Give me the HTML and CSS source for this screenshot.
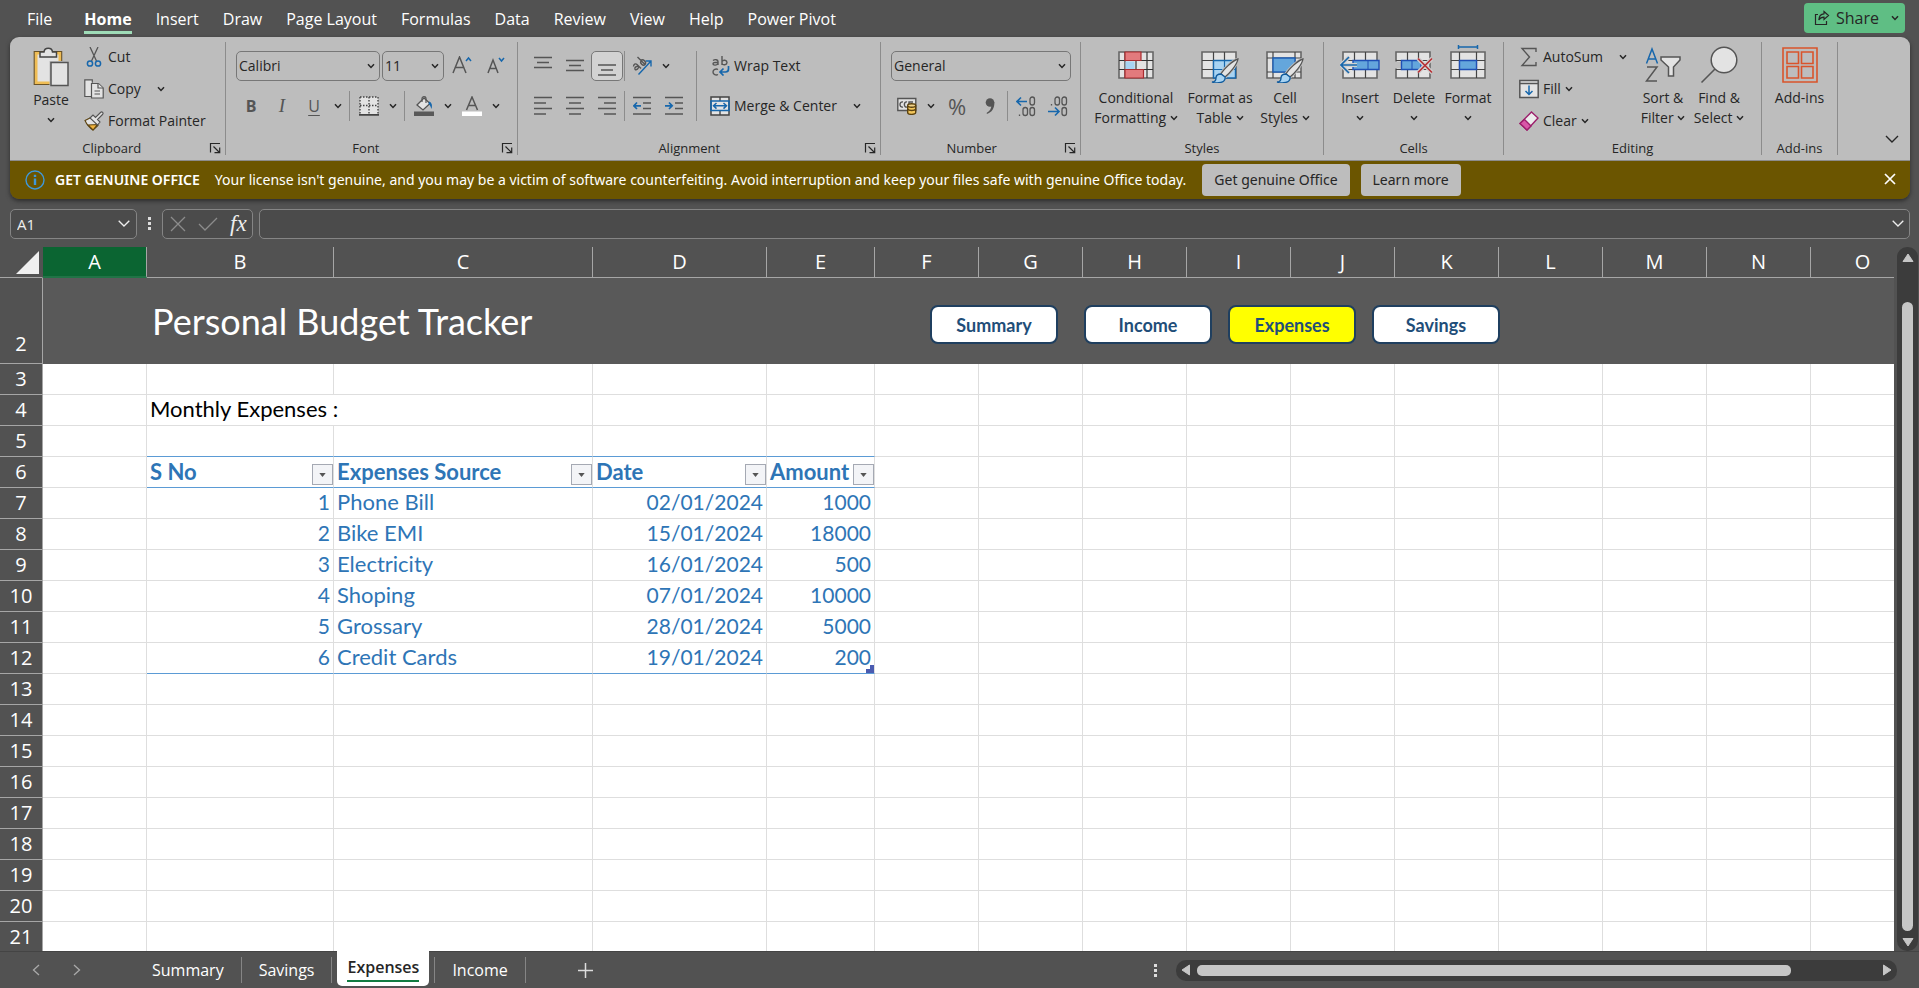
FILE: index.html
```html
<!DOCTYPE html>
<html lang="en">
<head>
<meta charset="utf-8">
<title>Personal Budget Tracker</title>
<link rel="stylesheet" href="styles.css">
</head>
<body>
<svg class="defs" aria-hidden="true">
  <symbol id="chev" viewBox="0 0 8 6"><path d="M1 1.2 4 4.4 7 1.2" fill="none" stroke="currentColor" stroke-width="1.5"/></symbol>
  <symbol id="launch" viewBox="0 0 12 12"><path d="M1.5 10.5V1.5H11M4.5 4.5l6 6M10.700 5.500v5.200H5.500" fill="none" stroke="currentColor" stroke-width="1.2"/></symbol>
  <symbol id="grid" viewBox="0 0 36 28"><path d="M1 1h34v26H1z" fill="#e3e3e3" stroke="#666" stroke-width="1.600"/><path d="M1 9.500h34M1 18.500h34M12.500 1v26M23.500 1v26" stroke="#444" stroke-width="1.200"/></symbol>
  <symbol id="brush" viewBox="0 0 28 26"><path d="M27 1C22 2 12 12 10 16l4 3c4-3 12-12 13-18z" fill="#e3e3e3" stroke="#bdbdbd" stroke-width="3"/><path d="M27 1C22 2 12 12 10 16l4 3c4-3 12-12 13-18z" fill="#e3e3e3" stroke="#555" stroke-width="1.300"/><path d="M10 16c-4 0-5 2-5 4 0 3-2 4-4 4 5 2 14 1 13-5z" fill="#a8d3f2" stroke="#0f5a9c" stroke-width="1.300"/></symbol>
</svg>

<header class="menu">
  <nav class="tabs">
    <a href="#file" class="tab file">File</a>
    <a href="#home" class="tab active">Home</a>
    <a href="#insert" class="tab">Insert</a>
    <a href="#draw" class="tab">Draw</a>
    <a href="#layout" class="tab">Page Layout</a>
    <a href="#formulas" class="tab">Formulas</a>
    <a href="#data" class="tab">Data</a>
    <a href="#review" class="tab">Review</a>
    <a href="#view" class="tab">View</a>
    <a href="#help" class="tab">Help</a>
    <a href="#pivot" class="tab">Power Pivot</a>
  </nav>
  <button class="share"><svg width="16" height="16" viewBox="0 0 16 16" fill="none" stroke="currentColor" stroke-width="1.200"><path d="M4 4.500H1.500v10h11V11M10 1.500l4.500 4-4.500 4V7.200C7.500 7.200 6 8 4.800 10 5 6.500 7 4 10 3.800z"/></svg>Share<svg class="chev"><use href="#chev"/></svg></button>
</header>

<div class="panel">
  <div class="ribbon">
    <section class="group clipboard">
      <div class="body">
        <button class="big"><span class="pic low"><svg width="36" height="40" viewBox="0 0 36 40"><path d="M3 6h24v30H3z" fill="#e3e3e3" stroke="#efbd55" stroke-width="3"/><path d="M1.200 4.500h27.500v33H1.200z" fill="none" stroke="#6b5326" stroke-width="1.100"/><path d="M7 10V5h4c.5-5 8-5 8.500 0h4v5z" fill="#e3e3e3" stroke="#444" stroke-width="1.500"/><path d="M16.500 14h18v25h-18z" fill="#bdbdbd"/><path d="M18 15.500h17v23H18z" fill="#e3e3e3" stroke="#555" stroke-width="1.500"/></svg></span><span>Paste</span><svg class="chev"><use href="#chev"/></svg></button>
        <div class="stack">
          <button class="small"><svg width="20" height="20" viewBox="0 0 20 20" fill="none"><path d="M6 0l6.500 14M14 0 7.500 14" stroke="#555" stroke-width="1.300"/><circle cx="6" cy="16.500" r="2.600" stroke="#1767ac" stroke-width="1.500"/><circle cx="14" cy="16.500" r="2.600" stroke="#1767ac" stroke-width="1.500"/></svg>Cut</button>
          <button class="small"><svg width="20" height="20" viewBox="0 0 20 20" fill="#e3e3e3" stroke="#555" stroke-width="1.200"><path d="M8 17.500H.8V.8h7.500v3"/><path d="M7.500 4.500h7l4.700 4.500v10H7.500z"/><path d="M14 4.500V9h5M10.500 12h5.500M10.500 15h5.500"/></svg>Copy<svg class="chev far"><use href="#chev"/></svg></button>
          <button class="small"><svg width="20" height="20" viewBox="0 0 20 20" stroke="#555" stroke-width="1.100"><path d="M1 9.500 7 6.500l7 8-5 4.500c-3-2-6-5-8-9.500z" fill="#e3e3e3" stroke="#5c4310"/><path d="M4 14l9.500-.5L9 19z" fill="#efb23c" stroke="#5c4310"/><path d="M6 7 9 4l2.500 2.500 5-5c1.500-1.500 3.500.5 2 2l-5 5L16 11l-2.500 3z" fill="#e3e3e3"/></svg>Format Painter</button>
        </div>
      </div>
      <footer><span></span><span>Clipboard</span><svg class="launch"><use href="#launch"/></svg></footer>
    </section>

    <section class="group font">
      <div class="body rows">
        <div class="row tight">
          <label class="combo w-font"><select aria-label="Font"><option>Calibri</option></select><svg class="chev"><use href="#chev"/></svg></label>
          <label class="combo w-size"><select aria-label="Font size"><option>11</option></select><svg class="chev"><use href="#chev"/></svg></label>
          <button class="tool" aria-label="Increase font size"><svg width="20" height="20" viewBox="0 0 20 20" fill="none" stroke-width="1.500"><path d="M1 17 7.500 1 14 17M3 11.500h9" stroke="#555"/><path d="M14 5l2.500-3L19 5" stroke="#1767ac"/></svg></button>
          <button class="tool" aria-label="Decrease font size"><svg width="20" height="20" viewBox="0 0 20 20" fill="none" stroke-width="1.500"><path d="M2 17 7 4 12 17M4 12.500h6.500" stroke="#555"/><path d="M13 2l2.500 3L18 2" stroke="#1767ac"/></svg></button>
        </div>
        <div class="row">
          <button class="tool glyph b">B</button><button class="tool glyph i">I</button><button class="tool glyph u">U</button><button class="drop" aria-label="Underline options"><svg class="chev"><use href="#chev"/></svg></button>
          <i class="sep"></i>
          <button class="tool" aria-label="Borders"><svg width="20" height="20" viewBox="0 0 20 20"><path d="M1 1h18v17H1z" fill="#e3e3e3"/><path d="M1 1h18v17M1 1v17M10 1v17M1 9.500h18" fill="none" stroke="#444" stroke-width="1.400" stroke-dasharray="1.500 1.500"/><path d="M0 18.800h20" stroke="#444" stroke-width="1.700"/></svg></button><button class="drop" aria-label="Border options"><svg class="chev"><use href="#chev"/></svg></button>
          <i class="sep"></i>
          <button class="tool" aria-label="Fill colour"><svg width="20" height="20" viewBox="0 0 20 20"><path d="M10 2 3 9l6 5 7-6.500z" fill="#e3e3e3" stroke="#555" stroke-width="1.300"/><path d="M8 6V2.500c0-2.500 4-2.500 4 0V7" fill="none" stroke="#555" stroke-width="1.200"/><path d="M15 5.500c3 1 3.500 4 2.500 7.500-1-2-1-4-3-5z" fill="#1767ac"/><path d="M0 15.500h20V20H0z" fill="#595959"/></svg></button><button class="drop" aria-label="Fill options"><svg class="chev"><use href="#chev"/></svg></button>
          <button class="tool" aria-label="Font colour"><svg width="20" height="20" viewBox="0 0 20 20"><path d="M4.500 14 10 1l5.500 13M6.500 9.500h7" fill="none" stroke="#555" stroke-width="1.500"/><path d="M0 15.500h20V20H0z" fill="#fff"/></svg></button><button class="drop" aria-label="Font colour options"><svg class="chev"><use href="#chev"/></svg></button>
        </div>
      </div>
      <footer><span></span><span>Font</span><svg class="launch"><use href="#launch"/></svg></footer>
    </section>

    <section class="group align">
      <div class="body split">
        <div class="rows">
          <div class="row">
            <button class="tool" aria-label="Top align"><svg width="18" height="20" viewBox="0 0 18 20" class="ln"><path d="M0 1.500h18M3 6.500h12M0 11.500h18"/></svg></button>
            <button class="tool" aria-label="Middle align"><svg width="18" height="20" viewBox="0 0 18 20" class="ln"><path d="M0 4.500h18M3 9.500h12M0 14.500h18"/></svg></button>
            <button class="tool on" aria-label="Bottom align"><svg width="18" height="20" viewBox="0 0 18 20" class="ln"><path d="M0 9h18M3 14h12M0 19h18"/></svg></button>
            <i class="sep"></i>
            <button class="tool" aria-label="Orientation"><svg width="20" height="20" viewBox="0 0 20 20" fill="none" stroke-width="1.400"><path d="M6.500 18.500 19 5M19 10.500V5h-5.500" stroke="#1767ac"/><g stroke="#555"><path d="M1.500 10.500c0-2 2-3.500 3.500-2l4 4M6.500 10.500c-1.500-1-4.500 1-3.500 2.700 1.200 1.500 4-.7 3.500-2.700M5.500 1l8 8M9 4.500c2-2 6 1.500 4 4-2 2-5.500-1.500-4-4"/></g></svg></button><button class="drop" aria-label="Orientation options"><svg class="chev"><use href="#chev"/></svg></button>
          </div>
          <div class="row">
            <button class="tool" aria-label="Align left"><svg width="18" height="20" viewBox="0 0 18 20" class="ln"><path d="M0 1.500h18M0 7h12M0 12.500h18M0 18h12"/></svg></button>
            <button class="tool" aria-label="Center"><svg width="18" height="20" viewBox="0 0 18 20" class="ln"><path d="M0 1.500h18M3 7h12M0 12.500h18M3 18h12"/></svg></button>
            <button class="tool" aria-label="Align right"><svg width="18" height="20" viewBox="0 0 18 20" class="ln"><path d="M0 1.500h18M6 7h12M0 12.500h18M6 18h12"/></svg></button>
            <i class="sep"></i>
            <button class="tool" aria-label="Decrease indent"><svg width="18" height="20" viewBox="0 0 18 20" class="ln"><path d="M0 1.500h18M10 7h8M10 12.500h8M0 18h18"/><path d="M8 9.800H1M4 6.500.800 9.800 4 13" class="bl"/></svg></button>
            <button class="tool" aria-label="Increase indent"><svg width="18" height="20" viewBox="0 0 18 20" class="ln"><path d="M0 1.500h18M10 7h8M10 12.500h8M0 18h18"/><path d="M0 9.800h7M4 6.500l3.200 3.300L4 13" class="bl"/></svg></button>
          </div>
        </div>
        <div class="rows second">
          <button class="small"><svg width="20" height="20" viewBox="0 0 20 20" fill="none" stroke="#555" stroke-width="1.400"><path d="M3 4.500c2-1.500 5-1 5 1V9M8 6.300c-3 0-5 .5-5 1.700s3.500 2 5-.5M12 0v9M12 5.500c1-2 5-1.500 5 1s-4 3-5 1M8 13.500c-2-1.200-5 0-5 2.500s3 3.700 5 2.500"/><path d="M18.500 10v3c0 2-1 3-3 3H10M13.500 12.500 10 16l3.500 3.500" stroke="#1767ac" stroke-width="1.700"/></svg>Wrap Text</button>
          <button class="small"><svg width="20" height="20" viewBox="0 0 20 20" fill="none"><path d="M1 1h18v18H1z" fill="#e3e3e3" stroke="#444" stroke-width="1.500"/><path d="M10 1v4M10 15v4" stroke="#444" stroke-width="1.400"/><path d="M1 5h18v9.500H1z" stroke="#1767ac" stroke-width="1.600"/><path d="M3.500 9.800h13M6.500 7 3.500 9.800l3 2.800M13.500 7l3 2.800-3 2.800" stroke="#1767ac" stroke-width="1.500"/></svg>Merge &amp; Center<svg class="chev far"><use href="#chev"/></svg></button>
        </div>
      </div>
      <footer><span></span><span>Alignment</span><svg class="launch"><use href="#launch"/></svg></footer>
    </section>

    <section class="group number">
      <div class="body rows">
        <div class="row"><label class="combo w-num"><select aria-label="Number format"><option>General</option></select><svg class="chev"><use href="#chev"/></svg></label></div>
        <div class="row">
          <button class="tool" aria-label="Accounting format"><svg width="20" height="18" viewBox="0 0 20 18" fill="none" stroke="#555" stroke-width="1.400"><path d="M.8 1.500h18v12H.8z" fill="#e3e3e3"/><path d="M6 5c-4-1-4 6 0 5M10 5c-3.500-1-3.500 6 0 5M12 10V5h4"/><path d="M10.700 8.500v7c0 2.500 8 2.500 8 0v-7" fill="#f3c65b" stroke="#5c4310"/><ellipse cx="14.700" cy="8.500" rx="4" ry="1.700" fill="#f3d48a" stroke="#5c4310"/><path d="M10.700 12c1 2 7 2 8 0" stroke="#5c4310"/></svg></button><button class="drop" aria-label="Accounting options"><svg class="chev"><use href="#chev"/></svg></button>
          <button class="tool wide glyph pc">%</button>
          <button class="tool comma" aria-label="Comma style"><svg width="12" height="20" viewBox="0 0 12 20"><circle cx="6" cy="6.500" r="4.300" fill="#555"/><path d="M10.300 6c.5 6-2.500 10.500-7.500 12v-1.300C6 15 7.500 12.500 7.300 9z" fill="#555"/></svg></button>
          <i class="sep"></i>
          <button class="tool" aria-label="Increase decimal"><svg width="20" height="22" viewBox="0 0 20 22" fill="none" stroke="#555" stroke-width="1.300"><rect x="14" y="2" width="4.500" height="8" rx="2.200"/><rect x="7" y="12.500" width="4.500" height="8" rx="2.200"/><rect x="14" y="12.500" width="4.500" height="8" rx="2.200"/><path d="M3.500 19.500v1.500"/><path d="M11 6.500H1M5 2.500l-4 4 4 4" stroke="#1767ac" stroke-width="1.600"/></svg></button>
          <button class="tool" aria-label="Decrease decimal"><svg width="20" height="22" viewBox="0 0 20 22" fill="none" stroke="#555" stroke-width="1.300"><rect x="7" y="2" width="4.500" height="8" rx="2.200"/><rect x="14" y="2" width="4.500" height="8" rx="2.200"/><rect x="14" y="12.500" width="4.500" height="8" rx="2.200"/><path d="M3.500 9v1.500"/><path d="M0 16.500h11M7 12.500l4 4-4 4" stroke="#1767ac" stroke-width="1.600"/></svg></button>
        </div>
      </div>
      <footer><span></span><span>Number</span><svg class="launch"><use href="#launch"/></svg></footer>
    </section>

    <section class="group styles">
      <div class="body">
        <button class="big w-cf"><span class="pic"><svg width="36" height="28" viewBox="0 0 36 28"><path d="M1 1h34v26H1z" fill="#e3e3e3" stroke="#666" stroke-width="1.600"/><path d="M1 9.500h34M1 18.500h34M7 1v26M29 1v26M18 9v10" stroke="#333" stroke-width="1.200"/><path d="M7 1h16v8.500H7zM7 18.500h18.500V27H7z" fill="#e37a7d" stroke="#a92c30" stroke-width="1.200"/><path d="M7.500 10.500h9v7.500h-9z" fill="#a8d3f2"/></svg></span><span>Conditional</span><span>Formatting <svg class="chev"><use href="#chev"/></svg></span></button>
        <button class="big w-ft"><span class="pic"><svg width="38" height="36" viewBox="0 0 38 36"><use href="#grid" y="4" width="36" height="28"/><path d="M12.500 13.500h22v17.500h-22z" fill="#a8d3f2" stroke="#1767ac" stroke-width="1.400"/><path d="M12.500 22.500h22M23.500 13v18" stroke="#1767ac" stroke-width="1.200"/><use href="#brush" x="10" y="11" width="28" height="26"/></svg></span><span>Format as</span><span>Table <svg class="chev"><use href="#chev"/></svg></span></button>
        <button class="big w-cs"><span class="pic"><svg width="38" height="36" viewBox="0 0 38 36"><path d="M1 5h34v26H1z" fill="#e3e3e3" stroke="#666" stroke-width="1.600"/><path d="M1 11h34M1 25h34M7 5v26M29 5v26" stroke="#444" stroke-width="1.200"/><path d="M7 11h22v14H7z" fill="#64a6dc" stroke="#1f5fb5" stroke-width="1.400"/><use href="#brush" x="10" y="11" width="28" height="26"/></svg></span><span>Cell</span><span>Styles <svg class="chev"><use href="#chev"/></svg></span></button>
      </div>
      <footer><span></span><span>Styles</span><span></span></footer>
    </section>

    <section class="group cells">
      <div class="body">
        <button class="big"><span class="pic"><svg width="40" height="28" viewBox="0 0 40 28"><use href="#grid" x="2" width="36" height="28"/><path d="M13 9.500h26v9H13z" fill="#64a6dc" stroke="#1f4fb5" stroke-width="1.400"/><path d="M28 9.500v9" stroke="#1f4fb5"/><path d="M17 14H1M9 6l-8 8 8 8" fill="none" stroke="#d0d0d0" stroke-width="4"/><path d="M17 14H1M9 6l-8 8 8 8" fill="none" stroke="#1767ac" stroke-width="1.600"/></svg></span><span>Insert</span><svg class="chev"><use href="#chev"/></svg></button>
        <button class="big"><span class="pic"><svg width="38" height="28" viewBox="0 0 38 28"><use href="#grid" width="36" height="28"/><path d="M0 10.500h6v7H0z" fill="#bdbdbd"/><path d="M6.500 9.500H26v9H6.500z" fill="#64a6dc" stroke="#1f4fb5" stroke-width="1.400"/><path d="M17 9.500v9" stroke="#1f4fb5"/><path d="M23 7.500 37 21.500M37 7.500 23 21.500" stroke="#d0d0d0" stroke-width="4"/><path d="M23 7.500 37 21.500M37 7.500 23 21.500" stroke="#b83236" stroke-width="1.700"/></svg></span><span>Delete</span><svg class="chev"><use href="#chev"/></svg></button>
        <button class="big"><span class="pic"><svg width="36" height="40" viewBox="0 0 36 40"><path d="M1 7h34v26H1z" fill="#e3e3e3" stroke="#666" stroke-width="1.600"/><path d="M1 15.500h34M1 24.500h34M9.500 7v26M26.500 7v26" stroke="#444" stroke-width="1.200"/><path d="M9.500 15.500h17v9h-17z" fill="#64a6dc" stroke="#1f4fb5" stroke-width="1.400"/><path d="M8.500 2h19M8.500 0v4M27.500 0v4" stroke="#1767ac" stroke-width="1.500"/></svg></span><span>Format</span><svg class="chev"><use href="#chev"/></svg></button>
      </div>
      <footer><span></span><span>Cells</span><span></span></footer>
    </section>

    <section class="group editing">
      <div class="body">
        <div class="stack">
          <button class="small"><svg width="20" height="20" viewBox="0 0 20 20"><path d="M17 5V1.500H3l7.500 8.500L3 18.500h14V15" fill="none" stroke="#555" stroke-width="1.400"/></svg>AutoSum<svg class="chev far"><use href="#chev"/></svg></button>
          <button class="small"><svg width="20" height="20" viewBox="0 0 20 20"><path d="M.8 1.500h18.400v17H.8z" fill="#e3e3e3" stroke="#555" stroke-width="1.500"/><path d="M1 4.500h18" stroke="#555" stroke-width="1.500"/><path d="M10 6.500v9M6.500 12l3.500 3.500 3.500-3.500" fill="none" stroke="#1767ac" stroke-width="1.500"/></svg>Fill <svg class="chev"><use href="#chev"/></svg></button>
          <button class="small"><svg width="20" height="20" viewBox="0 0 20 20" stroke="#9c1f6c" stroke-width="1.400"><path d="M12.500 1 19 7 8 19 1 12.500z" fill="#ececec"/><path d="M5.500 8.500 12 15l-4 4-7-6.500z" fill="#d957a8"/></svg>Clear <svg class="chev"><use href="#chev"/></svg></button>
        </div>
        <button class="big"><span class="pic"><svg width="36" height="36" viewBox="0 0 36 36" fill="none" stroke-width="1.500"><path d="M1.500 16.500 7 2l5.500 14.500M3.500 12h7" stroke="#1767ac"/><path d="M2 20h10L1.500 34H12" stroke="#555"/><path d="M16 10h19v3l-6.500 7v9h-5v-9L16 13z" fill="#e3e3e3" stroke="#555"/></svg></span><span>Sort &amp;</span><span>Filter <svg class="chev"><use href="#chev"/></svg></span></button>
        <button class="big"><span class="pic"><svg width="38" height="38" viewBox="0 0 38 38"><circle cx="24" cy="14" r="12.800" fill="#e3e3e3" stroke="#555" stroke-width="1.500"/><path d="M15 23 1.500 36.500" stroke="#555" stroke-width="1.600"/></svg></span><span>Find &amp;</span><span>Select <svg class="chev"><use href="#chev"/></svg></span></button>
      </div>
      <footer><span></span><span>Editing</span><span></span></footer>
    </section>

    <section class="group addins">
      <div class="body">
        <button class="big"><span class="pic"><svg width="36" height="36" viewBox="0 0 36 36" fill="none" stroke="#d9542b" stroke-width="1.600"><path d="M1 1h34v34H1zM5 5h11.500v11.500H5zM19.500 5H31v11.500H19.500zM5 19.500h11.500V31H5zM19.500 19.500H31V31H19.500z"/></svg></span><span>Add-ins</span></button>
      </div>
      <footer><span></span><span>Add-ins</span><span></span></footer>
    </section>
    <button class="collapse" aria-label="Collapse ribbon"><svg width="14" height="8" viewBox="0 0 14 8"><path d="M1 1l6 6 6-6" fill="none" stroke="currentColor" stroke-width="1.400"/></svg></button>
  </div>

  <div class="notice">
    <svg width="20" height="20" viewBox="0 0 20 20"><circle cx="10" cy="10" r="9" fill="none" stroke="#3f97d8" stroke-width="1.400"/><path d="M8.800 4.800h2.400v2.200H8.800zM8.800 8.500h2.400v6.500H8.800z" fill="#3f97d8"/></svg>
    <strong>GET GENUINE OFFICE</strong>
    <span class="msg">Your license isn't genuine, and you may be a victim of software counterfeiting. Avoid interruption and keep your files safe with genuine Office today.</span>
    <button class="act">Get genuine Office</button>
    <button class="act">Learn more</button>
    <button class="close" aria-label="Close"><svg width="12" height="12" viewBox="0 0 12 12"><path d="M1 1l10 10M11 1 1 11" stroke="#fff" stroke-width="1.700"/></svg></button>
  </div>
</div>

<div class="fbar">
  <label class="name"><input value="A1" aria-label="Name box"><svg width="12" height="7" viewBox="0 0 12 7"><path d="M.700.700 6 6 11.300.700" fill="none" stroke="currentColor" stroke-width="1.300"/></svg></label>
  <span class="dots"></span>
  <div class="fx">
    <svg width="16" height="16" viewBox="0 0 16 16"><path d="M1 1l14 14M15 1 1 15" stroke="#8c8c8c" stroke-width="1.300"/></svg>
    <svg width="20" height="14" viewBox="0 0 20 14"><path d="M1 7l6 6L19 1" fill="none" stroke="#8c8c8c" stroke-width="1.300"/></svg>
    <button class="fn">fx</button>
  </div>
  <label class="formula"><input aria-label="Formula bar"><svg width="12" height="7" viewBox="0 0 12 7"><path d="M.700.700 6 6 11.300.700" fill="none" stroke="currentColor" stroke-width="1.300"/></svg></label>
</div>

<main class="work">
  <div class="sheet">
    <table>
      <colgroup><col class="c-head"><col class="c-std"><col class="c-b"><col class="c-c"><col class="c-d"><col class="c-e"><col class="c-std" span="10"></colgroup>
      <thead><tr id="letters"><th class="corner"><svg width="23" height="23" viewBox="0 0 23 23"><path d="M23 0v23H0z" fill="#f0f0f0"/></svg></th></tr></thead>
      <tbody id="cells">
        <tr class="banner"><th>2</th><td></td><td colspan="14"><div class="head">
          <h1>Personal Budget Tracker</h1>
          <nav><a href="#summary">Summary</a><a href="#income">Income</a><a href="#expenses" class="current">Expenses</a><a href="#savings">Savings</a></nav>
        </div></td></tr>
      </tbody>
    </table>
  </div>
  <div class="vscroll"><svg width="12" height="10" viewBox="0 0 12 10"><path d="M6 1 11 8.500H1z" fill="#c6c6c6" stroke="#c6c6c6" stroke-linejoin="round"/></svg><span class="thumb"></span><svg width="12" height="10" viewBox="0 0 12 10"><path d="M6 9 11 1.500H1z" fill="#c6c6c6" stroke="#c6c6c6" stroke-linejoin="round"/></svg></div>
</main>

<footer class="bottom">
  <div class="arrows"><svg width="8" height="12" viewBox="0 0 8 12"><path d="M7 1 1.500 6 7 11"/></svg><svg width="8" height="12" viewBox="0 0 8 12"><path d="M1 1l5.500 5L1 11"/></svg></div>
  <nav class="sheets">
    <a href="#s1">Summary</a><a href="#s2">Savings</a><a href="#s3" class="current"><span>Expenses</span></a><a href="#s4" class="next">Income</a>
  </nav>
  <button class="plus" aria-label="New sheet"><svg width="15" height="15" viewBox="0 0 15 15"><path d="M7.500 0v15M0 7.500h15" stroke="#ddd" stroke-width="1.500"/></svg></button>
  <span class="dots"></span>
  <div class="hscroll"><svg width="10" height="12" viewBox="0 0 10 12"><path d="M1 6 8.500 1v10z" fill="#c6c6c6" stroke="#c6c6c6" stroke-linejoin="round"/></svg><span class="thumb"></span><svg width="10" height="12" viewBox="0 0 10 12"><path d="M9 6 1.500 1v10z" fill="#c6c6c6" stroke="#c6c6c6" stroke-linejoin="round"/></svg></div>
</footer>
<script src="app.js"></script>
</body>
</html>
```
FILE: styles.css
```css
* { box-sizing: border-box; }
body {
  margin: 0;
  height: 100vh;
  display: flex;
  flex-direction: column;
  overflow: hidden;
  background: #525252;
  color: #262626;
  font: 15px/20px "Open Sans", "Noto Sans", sans-serif;
}
button, input, select { font: inherit; color: inherit; border: 0; padding: 0; background: none; }
a { color: inherit; text-decoration: none; }
svg { flex: none; }
.defs { position: absolute; width: 0; height: 0; }
.chev { width: 8px; height: 6px; }

/* menu */
.menu { display: flex; justify-content: space-between; height: 37px; padding: 3px 14px 0 27px; color: #fff; font-size: 16px; }
.tabs { display: flex; gap: 24px; }
.tab { height: 31px; line-height: 32px; }
.tab.file { margin-right: 8px; }
.tab.active { font-weight: 700; border-bottom: 3px solid #9fdcb8; }
.share { display: flex; align-items: center; gap: 6px; height: 30px; padding: 0 6px 0 10px; border-radius: 4px; background: #5fbe84; color: #262626; }
.share .chev { margin-left: 6px; }

/* ribbon */
.panel { margin: 0 9px 0 10px; border-radius: 9px; overflow: hidden; box-shadow: 0 2px 4px #2c2c2c; flex: none; }
.ribbon { display: flex; height: 124px; background: #bdbdbd; border-bottom: 1px solid #8c8c8c; font-size: 14px; }
.group { display: flex; flex-direction: column; margin: 5px 0; border-right: 1px solid #8c8c8c; flex: none; }
.group footer { display: grid; grid-template-columns: 1fr auto 1fr; align-items: center; font-size: 13px; line-height: 14px; padding: 0 4px; }
.launch { width: 12px; height: 12px; justify-self: end; }
.body { flex: 1; display: flex; }
.clipboard { width: 216px; padding-left: 13px; }
.clipboard footer { grid-template-columns: 6fr auto 7fr; margin-left: -13px; }
.font { width: 292px; }
.font footer { grid-template-columns: 11fr auto 12fr; }
.align { width: 363px; }
.align footer { grid-template-columns: 7fr auto 8fr; }
.number { width: 200px; }
.number footer { grid-template-columns: 7fr auto 9fr; }
.styles { width: 243px; }
.cells { width: 180px; }
.editing { width: 258px; }
.addins { width: 76px; }
.big { display: flex; flex-direction: column; align-items: center; width: 56px; white-space: nowrap; }
.big > .chev { margin-top: 7px; }
.big span .chev { vertical-align: 2px; }
.pic { display: flex; align-items: center; justify-content: center; height: 46px; }
.pic.low { height: 48px; padding-top: 2px; }
.stack { display: flex; flex-direction: column; gap: 2px; margin-left: 5px; }
.small { display: flex; align-items: center; gap: 4px; height: 30px; white-space: nowrap; }
.small .far { margin-left: 12px; }
.rows { display: flex; flex-direction: column; gap: 10px; padding: 9px 0 0 10px; }
.row { display: flex; align-items: center; height: 30px; }
.row.tight { gap: 2px; }
.tool { display: flex; align-items: center; justify-content: center; width: 32px; height: 30px; }
.tool.on { border: 1px solid #777; border-radius: 5px; background: #d2d2d2; }
.tool.wide { width: 36px; }
.tool.comma { width: 30px; }
.drop { display: flex; align-items: center; justify-content: center; width: 16px; height: 30px; }
.sep { width: 1px; height: 30px; margin: 0 2px; background: #8c8c8c; }
.glyph { font-size: 16px; color: #555; }
.glyph.b { width: 30px; font-weight: 700; }
.glyph.i { font-family: "Liberation Serif", serif; font-style: italic; font-size: 19px; }
.glyph.u { text-decoration: underline; text-underline-offset: 3px; }
.glyph.pc { font-size: 22px; }
.font .sep { margin: 0 3px; }
.ln { fill: none; stroke: #555; stroke-width: 1.4; }
.ln .bl { stroke: #1767ac; stroke-width: 1.7; }
.combo { display: flex; align-items: center; height: 30px; padding: 0 4px 0 2px; border: 1px solid #777; border-radius: 5px; }
.combo select { flex: 1; min-width: 0; appearance: none; }
.w-font { width: 144px; }
.w-size { width: 62px; }
.w-num { width: 180px; }
.align .rows { padding-left: 9px; }
.align .sep { margin: 0 1px; }
.split .rows.second { margin: 9px 0 20px 6px; padding: 0 0 0 13px; border-left: 1px solid #8c8c8c; }
.styles .body, .cells .body { padding-left: 9px; }
.w-cf { width: 92px; }
.w-ft { width: 76px; }
.w-cs { width: 54px; }
.cells .big { width: 54px; }
.editing .stack { margin-left: 15px; width: 116px; }
.addins .body { justify-content: center; }
.collapse { margin: auto 0 12px auto; padding: 0 11px; }

/* licence notice */
.notice { display: flex; align-items: center; height: 38px; padding: 0 14px 0 15px; background: #6b5500; color: #fff; font: 14px/20px "Noto Sans", sans-serif; }
.notice strong { margin-left: 10px; font-weight: 600; white-space: nowrap; }
.msg { margin: 0 16px 0 15px; white-space: nowrap; }
.act { height: 32px; margin-right: 11px; padding: 0 12px; border-radius: 4px; background: #bdbdbd; color: #262626; white-space: nowrap; }
.close { margin-left: auto; }

/* formula bar */
.fbar { display: flex; align-items: center; height: 48px; padding: 1px 9px 0 10px; flex: none; color: #eee; }
.name, .fx, .formula { display: flex; align-items: center; height: 30px; border: 1px solid #858585; border-radius: 5px; background: #4b4b4b; }
.name { width: 127px; padding: 0 6px; }
.name input, .formula input { flex: 1; min-width: 0; }
.dots { width: 3px; height: 13px; margin: 0 11px; background: repeating-linear-gradient(#ddd 0 3px, transparent 3px 5px); }
.fx { gap: 12px; width: 91px; padding: 0 7px; margin-right: 6px; }
.fn { font: italic 400 23px/24px "Liberation Serif", serif; }
.formula { flex: 1; padding: 0 5px; }

/* worksheet */
.work { flex: 1; display: flex; min-height: 0; }
.sheet { flex: 1; min-width: 0; overflow: hidden; background: #fff; }
.sheet table { width: 1915px; table-layout: fixed; border-collapse: separate; border-spacing: 0; }
.c-head { width: 43px; }
.c-std { width: 104px; }
.c-b { width: 187px; }
.c-c { width: 259px; }
.c-d { width: 174px; }
.c-e { width: 108px; }
.sheet th { height: 31px; padding: 0; background: #525252; border: solid #a6a6a6; border-width: 0 1px 1px 0; color: #fff; font-weight: 400; font-size: 20px; line-height: 28px; }
.sheet td { height: 31px; padding: 0 3px 2px; border: solid #dedede; border-width: 0 1px 1px 0; font: 22px/28px Lato, sans-serif; white-space: nowrap; color: #2e75b6; }
.sheet th.corner { border-right-color: #525252; text-align: right; }
.corner svg { display: block; margin: 0 3px 0 auto; }
.sheet th.picked { background: #0b6532; border-bottom: 2px solid #217346; }
.sheet .banner th { height: 86px; padding-bottom: 5px; vertical-align: bottom; }
.sheet .banner td { background: #595959; border: 0; padding: 0; color: #fff; }
.head { display: grid; grid-template-columns: 783px auto; align-items: center; }
.head h1 { margin: 0; padding-left: 5px; font: 400 36px/42px Lato, sans-serif; }
.head nav { display: flex; gap: 16px; padding-top: 6px; }
.head a { width: 128px; height: 39px; border: 2px solid #1f3f5f; border-radius: 8px; background: #fff; color: #1f4e79; font: 700 18px/36px Lato, sans-serif; text-align: center; }
.head a:first-child { margin-right: 10px; }
.head a.current { background: #ff0; }
.sheet td.plain { color: #000; }
.sheet td.num { font-size: 21px; text-align: right; }
.sheet td.title { padding-bottom: 0; font-weight: 700; }
.sheet td.line { border-bottom-color: #5b9bd5; }
.cap { display: flex; justify-content: space-between; align-items: center; margin-right: -3px; }
.filter { display: flex; align-items: center; justify-content: center; width: 21px; height: 21px; margin-top: 5px; border: 1px solid #a5a9b3; background: #f3f4f7; }
.sheet td.last { position: relative; }
.handle { position: absolute; right: 0; bottom: 0; display: block; }

/* scroll bars */
.vscroll { display: flex; flex-direction: column; align-items: center; justify-content: space-between; width: 21px; margin: 0 1px 0 3px; padding: 6px 0 4px; border-radius: 10px; background: #3c3c3c; }
.vscroll .thumb { flex: 1; width: 11px; margin: 39px 0 6px; border-radius: 6px; background: #c6c6c6; }
.hscroll { display: flex; align-items: center; width: 721px; height: 21px; padding: 0 5px; border-radius: 10px; background: #3c3c3c; }
.hscroll .thumb { width: 594px; height: 11px; margin: 0 auto 0 6px; border-radius: 5px; background: #c6c6c6; }

/* sheet tabs */
.bottom { display: flex; align-items: center; height: 37px; padding-right: 22px; flex: none; color: #fff; border-top: 1px solid #444; }
.arrows { display: flex; gap: 33px; width: 135px; padding-left: 32px; }
.arrows path { fill: none; stroke: #aaa; stroke-width: 1.3; }
.sheets { display: flex; align-items: center; height: 36px; font-size: 16px; }
.sheets a { padding: 0 17px; line-height: 26px; border-right: 1px solid #858585; }
.sheets .current { align-self: flex-start; height: 35px; margin: -1px 5px 0; padding: 3px 10px 0; border: 0; border-radius: 0 0 5px 5px; background: #fff; color: #262626; font-weight: 600; }
.sheets .current span { display: block; border-bottom: 2px solid #107c41; }
.sheets .next { border-left: 1px solid #858585; }
.plus { display: flex; margin: 0 auto 0 52px; }
.bottom .dots { margin-right: 19px; }
```
FILE: app.js
```js
const letters = "ABCDEFGHIJKLMNO".split("");
const firstRow = 3;
const lastRow = 21;
const tableTop = 6;
const headings = ["S No", "Expenses Source", "Date", "Amount"];
const expenses = [
  [1, "Phone Bill", "02/01/2024", 1000],
  [2, "Bike EMI", "15/01/2024", 18000],
  [3, "Electricity", "16/01/2024", 500],
  [4, "Shoping", "07/01/2024", 10000],
  [5, "Grossary", "28/01/2024", 5000],
  [6, "Credit Cards", "19/01/2024", 200],
];
const arrow = '<svg width="7" height="4" viewBox="0 0 8 5"><path d="M0 0h8L4 5z" fill="#555"/></svg>';
const handle = '<svg class="handle" width="8" height="8" viewBox="0 0 8 8"><path d="M4 0h4v8H0V4h4z" fill="#4a5bb0"/></svg>';

const head = document.getElementById("letters");
letters.forEach((letter, i) => {
  const th = document.createElement("th");
  th.textContent = letter;
  if (i === 0) th.className = "picked";
  head.append(th);
});

const body = document.getElementById("cells");
for (let n = firstRow; n <= lastRow; n++) {
  const tr = body.insertRow();
  const th = document.createElement("th");
  th.textContent = n;
  tr.append(th);
  const record = expenses[n - tableTop - 1];
  for (let c = 0; c < letters.length; c++) {
    const td = tr.insertCell();
    const k = c - 1;
    const inTable = k >= 0 && k < headings.length;
    if (n === 4 && c === 1) {
      td.colSpan = 2;
      td.className = "plain";
      td.textContent = "Monthly Expenses :";
      c++;
    } else if (inTable && n === tableTop - 1) {
      td.className = "line";
    } else if (inTable && n === tableTop) {
      td.className = "title line";
      td.innerHTML = `<div class="cap">${headings[k]}<button class="filter" aria-label="Filter ${headings[k]}">${arrow}</button></div>`;
    } else if (inTable && record) {
      td.textContent = record[k];
      if (k !== 1) td.classList.add("num");
      if (n === tableTop + expenses.length) {
        td.classList.add("line");
        if (k === 3) {
          td.classList.add("last");
          td.insertAdjacentHTML("beforeend", handle);
        }
      }
    }
  }
}
```
